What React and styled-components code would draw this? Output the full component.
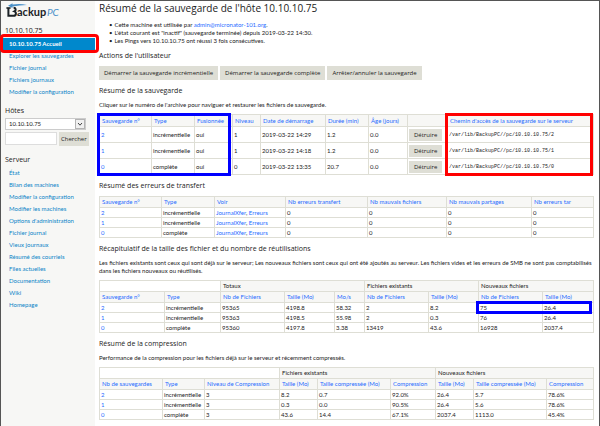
import React from "react";
import styled, { createGlobalStyle } from "styled-components";

const backups = [
  { num: "2", type: "incrémentielle", merged: "oui", level: "1", start: "2019-03-22 14:29", duration: "1.2", age: "0.0" },
  { num: "1", type: "incrémentielle", merged: "oui", level: "1", start: "2019-03-22 14:18", duration: "1.2", age: "0.0" },
  { num: "0", type: "complète", merged: "oui", level: "0", start: "2019-03-22 13:35", duration: "20.7", age: "0.0" },
];

const sizes = [
  ["2", "incrémentielle", "95365", "4198.8", "58.32", "2", "8.2", "75", "26.4"],
  ["1", "incrémentielle", "95363", "4198.5", "55.98", "2", "0.3", "76", "26.4"],
  ["0", "complète", "95360", "4197.8", "3.38", "13419", "43.6", "16928", "2037.4"],
];

const compression = [
  ["2", "incrémentielle", "3", "8.2", "0.7", "92.0%", "26.4", "5.7", "78.6%"],
  ["1", "incrémentielle", "3", "0.3", "0.0", "90.5%", "26.4", "5.6", "78.6%"],
  ["0", "complète", "3", "43.6", "14.4", "67.1%", "2037.4", "1113.0", "45.4%"],
];

const hostLinks = ["10.10.10.75 Accueil", "Explorer les sauvegardes", "Fichier journal", "Fichiers journaux", "Modifier la configuration"];

const serverLinks = [
  "État",
  "Bilan des machines",
  "Modifier la configuration",
  "Modifier les machines",
  "Options d'administration",
  "Fichier journal",
  "Vieux journaux",
  "Résumé des courriels",
  "Files actuelles",
  "Documentation",
  "Wiki",
  "Homepage",
];

function Logo() {
  return (
    <LogoSvg viewBox="0 0 54 15" role="img" aria-label="BackupPC">
      <path d="M2 2.8 L6.5 0.2 V1.6 C11 0.9 16 0.8 21 2 C16 2.2 11 2.7 6.5 3.6 V5 Z" fill="#4a90c8" />
      <path d="M2.4 5 V12.8 H7.6 C10.2 12.8 10.8 9.4 8.4 8.4 C10.4 7.4 10 4.8 7.6 4.8" fill="none" stroke="#1c2226" strokeWidth="2" />
      <path d="M0.4 5 H4.6" fill="none" stroke="#1c2226" strokeWidth="1.6" />
      <text x="11" y="13" fontSize="11" fontWeight="700" fill="#1c2226">ackup</text>
      <text x="41" y="13" fontSize="10" fontStyle="italic" fill="#4a90c8">PC</text>
    </LogoSvg>
  );
}

function Cols({ widths }) {
  return (
    <colgroup>
      {widths.map((w, i) => (
        <Col key={i} $w={w} />
      ))}
    </colgroup>
  );
}

function Head({ labels }) {
  return (
    <tr>
      {labels.map((label, i) => (
        <th key={i} scope="col">{label}</th>
      ))}
    </tr>
  );
}

function DataRow({ cells, boxed }) {
  return (
    <tr>
      {cells.map((cell, i) => (
        <td key={i}>
          {i === 0 ? <a href="#browse">{cell}</a> : cell}
          {boxed && i === 7 && <Outline $color="#0000ff" $top={-2} $left={-3} $width="calc(180% + 3px)" $height="13px" />}
        </td>
      ))}
    </tr>
  );
}

function App() {
  return (
    <>
      <GlobalStyle />
      <Page>
        <Sidebar>
          <Logo />
          <NavTitle>10.10.10.75</NavTitle>
          <Nav>
            {hostLinks.map((label, i) => (
              <NavLink key={label} href="#host" $active={i === 0}>
                {label}
                {i === 0 && <ActiveRing />}
              </NavLink>
            ))}
          </Nav>

          <NavTitle as="label" htmlFor="host">Hôtes</NavTitle>
          <Picker>
            <select id="host" defaultValue="10.10.10.75">
              <option>10.10.10.75</option>
            </select>
            <svg viewBox="0 0 10 10" aria-hidden="true">
              <rect x="0.5" y="0.5" width="9" height="9" fill="#f0f0f0" stroke="#b4b4b4" />
              <path d="M3 4 L5 6.2 L7 4" fill="none" stroke="#444" />
            </svg>
          </Picker>
          <Search>
            <input type="text" aria-label="Hôte" />
            <Button $pad={2}>Chercher</Button>
          </Search>

          <NavTitle>Serveur</NavTitle>
          <Nav>
            {serverLinks.map((label) => (
              <NavLink key={label} href="#server">{label}</NavLink>
            ))}
          </Nav>
        </Sidebar>

        <Content>
          <h1>Résumé de la sauvegarde de l'hôte 10.10.10.75</h1>
          <ul>
            <li>Cette machine est utilisée par <a href="mailto:admin@micronator-101.org">admin@micronator-101.org</a>.</li>
            <li>L'état courant est "inactif" (sauvegarde terminée) depuis 2019-03-22 14:30.</li>
            <li>Les Pings vers 10.10.10.75 ont réussi 3 fois consécutives.</li>
          </ul>

          <h2>Actions de l'utilisateur</h2>
          <Actions>
            <Button>Démarrer la sauvegarde incrémentielle</Button>
            <Button>Démarrer la sauvegarde complète</Button>
            <Button>Arrêter/annuler la sauvegarde</Button>
          </Actions>

          <h2>Résumé de la sauvegarde</h2>
          <p>Cliquer sur le numéro de l'archive pour naviguer et restaurer les fichiers de sauvegarde.</p>
          <TableWrap>
            <Table $row={16} $head={12}>
              <Cols widths={[52, 43, 38, 28, 65, 43, 39, 40, 146]} />
              <thead>
                <Head labels={["Sauvegarde n°", "Type", "Fusionnée", "Niveau", "Date de démarrage", "Durée (min)", "Âge (jours)", "", "Chemin d'accès de la sauvegarde sur le serveur"]} />
              </thead>
              <tbody>
                {backups.map((b) => (
                  <tr key={b.num}>
                    <td><a href="#browse">{b.num}</a></td>
                    <td>{b.type}</td>
                    <td>{b.merged}</td>
                    <td>{b.level}</td>
                    <td>{b.start}</td>
                    <td>{b.duration}</td>
                    <td>{b.age}</td>
                    <td><Button>Détruire</Button></td>
                    <td><Path>/var/lib/BackupPC//pc/10.10.10.75/{b.num}</Path></td>
                  </tr>
                ))}
              </tbody>
            </Table>
            <Outline $color="#0000ff" $top={-1} $left={-2} $width="calc(27% + 1px)" $height="63px" />
            <Outline $color="#ff0000" $top={-1} $right={0} $width="30%" $height="63px" />
          </TableWrap>

          <h2>Résumé des erreurs de transfert</h2>
          <Table $row={10}>
            <Cols widths={[62, 53, 71, 82, 79, 85, 62]} />
            <thead>
              <Head labels={["Sauvegarde n°", "Type", "Voir", "Nb erreurs transfert", "Nb mauvais fichiers", "Nb mauvais partages", "Nb erreurs tar"]} />
            </thead>
            <tbody>
              {backups.map((b) => (
                <tr key={b.num}>
                  <td><a href="#browse">{b.num}</a></td>
                  <td>{b.type}</td>
                  <td><a href="#xfer">JournalXfer</a>, <a href="#errors">Erreurs</a></td>
                  <td>0</td>
                  <td>0</td>
                  <td>0</td>
                  <td>0</td>
                </tr>
              ))}
            </tbody>
          </Table>

          <h2>Récapitulatif de la taille des fichier et du nombre de réutilisations</h2>
          <p>
            Les fichiers existants sont ceux qui sont déjà sur le serveur; Les nouveaux fichiers sont ceux qui ont été ajoutés au
            serveur. Les fichiers vides et les erreurs de SMB ne sont pas comptabilisés dans les fichiers nouveaux ou réutilisés.
          </p>
          <Table $row={10}>
            <Cols widths={[65, 56, 64, 50, 30, 64, 50, 64, 51]} />
            <thead>
              <GroupRow>
                <td colSpan={2} />
                <th colSpan={3}>Totaux</th>
                <th colSpan={2}>Fichiers existants</th>
                <th colSpan={2}>Nouveaux fichiers</th>
              </GroupRow>
              <Head labels={["Sauvegarde n°", "Type", "Nb de Fichiers", "Taille (Mo)", "Mo/s", "Nb de Fichiers", "Taille (Mo)", "Nb de Fichiers", "Taille (Mo)"]} />
            </thead>
            <tbody>
              {sizes.map((row, i) => (
                <DataRow key={row[0]} cells={row} boxed={i === 0} />
              ))}
            </tbody>
          </Table>

          <h2>Résumé de la compression</h2>
          <p>Performance de la compression pour les fichiers déjà sur le serveur et récemment compressés.</p>
          <Table $row={10}>
            <Cols widths={[63, 42, 75, 38, 73, 45, 38, 73, 47]} />
            <thead>
              <GroupRow>
                <td colSpan={3} />
                <th colSpan={3}>Fichiers existants</th>
                <th colSpan={3}>Nouveaux fichiers</th>
              </GroupRow>
              <Head labels={["Nb de sauvegardes", "Type", "Niveau de Compression", "Taille (Mo)", "Taille compressée (Mo)", "Compression", "Taille (Mo)", "Taille compressée (Mo)", "Compression"]} />
            </thead>
            <tbody>
              {compression.map((row) => (
                <DataRow key={row[0]} cells={row} />
              ))}
            </tbody>
          </Table>
        </Content>
      </Page>
    </>
  );
}

const GlobalStyle = createGlobalStyle`
  * { box-sizing: border-box; }

  body {
    margin: 0;
    background: #fff;
    color: #222;
    font: 6px/8px Lato, sans-serif;
  }

  input, select, button { font: inherit; color: inherit; margin: 0; }
  a { color: #1f6bff; text-decoration: none; }
`;

const Page = styled.div`
  display: flex;
  min-height: 100vh;
  border: 1px solid #555;
`;

const Sidebar = styled.aside`
  flex: 0 0 94px;
  padding: 2px 0 0 4px;
  background: #f7f7f5;
`;

const LogoSvg = styled.svg`
  display: block;
  width: 54px;
  height: 15px;
  margin: 0 0 8px 1px;
`;

const NavTitle = styled.h3`
  display: block;
  margin: 0;
  font-family: "Open Sans", sans-serif;
  font-size: 7px;
  line-height: 10px;
  font-weight: 400;
`;

const Nav = styled.nav`
  display: flex;
  flex-direction: column;
  margin: 2px 0 8px -2px;
`;

const NavLink = styled.a`
  position: relative;
  padding: 0 6px;
  line-height: 12px;
  color: ${(props) => (props.$active ? "#fff" : "#0b84c8")};
  background: ${(props) => (props.$active ? "#0088cc" : "transparent")};
  font-weight: ${(props) => (props.$active ? 700 : 400)};
`;

const ActiveRing = styled.span`
  position: absolute;
  inset: -4px -4px -3px -3px;
  border: 3px solid #ff0000;
  border-radius: 4px;
`;

const Picker = styled.div`
  position: relative;
  width: 81px;
  margin: 2px 0;

  select {
    display: block;
    appearance: none;
    width: 100%;
    height: 12px;
    padding: 0 3px;
    border: 1px solid #ccc;
    border-radius: 0;
    background: #fff;
  }

  svg {
    position: absolute;
    top: 1px;
    right: 1px;
    width: 10px;
    height: 10px;
    pointer-events: none;
  }
`;

const Search = styled.div`
  display: flex;
  gap: 2px;
  margin-bottom: 9px;

  input {
    width: 52px;
    height: 13px;
    padding: 0 3px;
    border: 1px solid #ddd;
    background: #fff;
  }
`;

const Button = styled.button`
  padding: 3px ${(props) => props.$pad ?? 5}px;
  border: 0;
  background: #deded5;
  font-family: "Open Sans", sans-serif;
  white-space: nowrap;

  td & {
    display: block;
    padding-block: 2px;
  }
`;

const Content = styled.main`
  flex: 1;
  min-width: 0;
  padding: 0 6px 6px 4px;

  h1, h2 { font-family: "Open Sans", sans-serif; font-weight: 400; }
  h1 { margin: 0; font-size: 10px; line-height: 14px; }
  h2 { margin: 6px 0 5px; font-size: 7px; line-height: 10px; }
  p { margin: 0 0 5px; }

  ul {
    margin: 6px 0 0;
    padding-left: 10px;
    list-style: none;
  }

  li::before {
    content: "•";
    margin-right: 2px;
  }
`;

const Actions = styled.div`
  display: flex;
  gap: 2px;
`;

const TableWrap = styled.div`
  position: relative;
`;

const Table = styled.table`
  width: 100%;
  table-layout: fixed;
  border-collapse: collapse;

  th, td {
    position: relative;
    height: ${(props) => props.$row}px;
    padding: 0 1px;
    border: 1px solid #deded5;
    text-align: left;
    white-space: nowrap;
  }

  th {
    height: ${(props) => props.$head ?? 11}px;
    padding: 0 2px;
    background: #f7f7f5;
    color: #1f6bff;
    font-weight: 400;
  }
`;

const GroupRow = styled.tr`
  && th { color: #222; }
`;

const Col = styled.col`
  width: ${(props) => props.$w}px;
`;

const Path = styled.code`
  font: 5px/8px "Liberation Mono", monospace;
`;

const Outline = styled.span`
  position: absolute;
  top: ${(props) => props.$top}px;
  ${(props) => (props.$right !== undefined ? `right: ${props.$right}px;` : `left: ${props.$left}px;`)}
  width: ${(props) => props.$width};
  height: ${(props) => props.$height};
  border: 3px solid ${(props) => props.$color};
  pointer-events: none;
`;

export default App;
